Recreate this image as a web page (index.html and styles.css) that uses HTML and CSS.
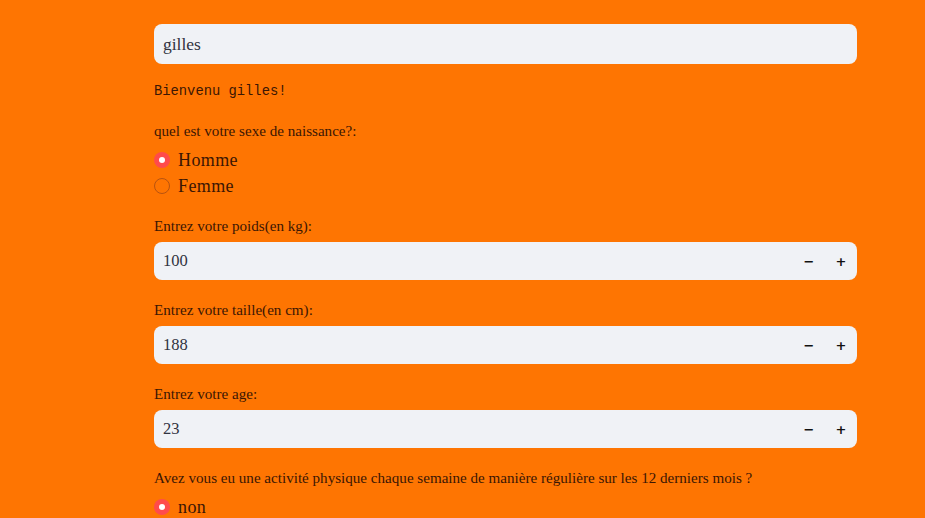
FILE: index.html
```html
<!DOCTYPE html>
<html lang="fr">
<head>
<meta charset="utf-8">
<link rel="stylesheet" href="styles.css">
</head>
<body>
<main class="main">
  <div class="text-input">gilles</div>
  <div class="mono">Bienvenu gilles!</div>
  <div class="group">
    <div class="label">quel est votre sexe de naissance?:</div>
    <div class="radios">
      <div class="radio"><span class="dot on"></span>Homme</div>
      <div class="radio"><span class="dot"></span>Femme</div>
    </div>
  </div>
  <div class="group">
    <div class="label">Entrez votre poids(en kg):</div>
    <div class="num"><span class="val">100</span><span class="btn">&minus;</span><span class="btn">+</span></div>
  </div>
  <div class="group">
    <div class="label">Entrez votre taille(en cm):</div>
    <div class="num"><span class="val">188</span><span class="btn">&minus;</span><span class="btn">+</span></div>
  </div>
  <div class="group">
    <div class="label">Entrez votre age:</div>
    <div class="num"><span class="val">23</span><span class="btn">&minus;</span><span class="btn">+</span></div>
  </div>
  <div class="group">
    <div class="label">Avez vous eu une activité physique chaque semaine de manière régulière sur les 12 derniers mois ?</div>
    <div class="radios">
      <div class="radio"><span class="dot on"></span>non</div>
    </div>
  </div>
</main>
</body>
</html>
```
FILE: styles.css
```css
html, body {
  margin: 0;
  padding: 0;
  background: #fe7502;
  height: 100%;
  overflow: hidden;
}
body {
  font-family: "Liberation Serif", "DejaVu Serif", serif;
  color: #3b1604;
}
.main {
  width: 703px;
  margin-left: 154px;
  padding-top: 24px;
  display: flex;
  flex-direction: column;
}
.text-input {
  height: 40px;
  background: #f0f2f6;
  border-radius: 8px;
  box-sizing: border-box;
  padding: 0 9px;
  display: flex;
  align-items: center;
  font-size: 17.5px;
  color: #31333f;
}
.mono {
  font-family: "Liberation Mono", "DejaVu Sans Mono", monospace;
  font-size: 13.8px;
  margin-top: 20px;
  line-height: 16px;
  color: #3b1604;
}
.group {
  display: flex;
  flex-direction: column;
}
.mono + .group { margin-top: 22px; }
.group + .group { margin-top: 21px; }
.label {
  font-size: 15.1px;
  line-height: 18px;
  margin-bottom: 7px;
}
.radios {
  display: flex;
  flex-direction: column;
  gap: 6px;
  margin-top: 3px;
}
.radio {
  display: flex;
  align-items: center;
  font-size: 18px;
  letter-spacing: 0.4px;
  line-height: 20px;
}
.dot {
  width: 16px;
  height: 16px;
  box-sizing: border-box;
  border-radius: 50%;
  border: 1px solid #b85310;
  margin-right: 8px;
  display: inline-flex;
  align-items: center;
  justify-content: center;
}
.dot.on {
  border: none;
  background: #ff4b4b;
}
.dot.on::after {
  content: "";
  width: 6px;
  height: 6px;
  border-radius: 50%;
  background: #fff;
}
.num {
  height: 38px;
  background: #f0f2f6;
  border-radius: 8px;
  display: flex;
  align-items: center;
  padding-left: 9px;
  font-size: 16.5px;
  color: #31333f;
}
.val { flex: 1; }
.btn {
  width: 32px;
  text-align: center;
  font-family: "DejaVu Sans", sans-serif;
  font-weight: bold;
  font-size: 13px;
  color: #111;
}
```
